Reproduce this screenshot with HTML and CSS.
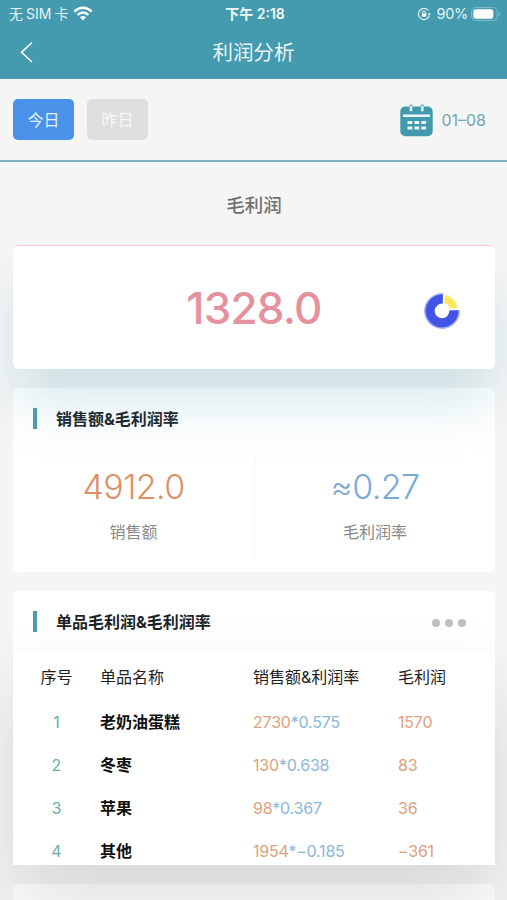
FILE: index.html
```html
<!DOCTYPE html>
<html lang="zh-CN">
<head>
<meta charset="utf-8">
<title>利润分析</title>
<link rel="stylesheet" href="styles.css">
</head>
<body>
<header class="top">
  <div class="status">
    <div class="status-left"><span>无<span class="sim">SIM</span>卡</span>
      <svg class="wifi" width="20" height="15" viewBox="0 0 20 15"><path d="M10 14.6 6.9 11.3Q10 8.7 13.1 11.3Z" fill="#fff"/><path d="M4.6 8.9Q10 4.2 15.4 8.9M1.3 5.5Q10-2 18.7 5.5" fill="none" stroke="#fff" stroke-width="2.5"/></svg>
    </div>
    <div class="status-time">下午 2:18</div>
    <div class="status-right">
      <svg width="14" height="14" viewBox="0 0 14 14"><circle cx="7" cy="7" r="5.6" fill="none" stroke="#e4f3f5" stroke-width="1.2" stroke-dasharray="29 6" transform="rotate(15 7 7)"/><path d="M10.6 6.2h3.2l-1.6 2.3z" fill="#e4f3f5"/><rect x="4.7" y="6.2" width="4.6" height="3.6" rx=".5" fill="#fff"/><path d="M5.6 6.4V5.3a1.4 1.4 0 0 1 2.8 0v1.1" fill="none" stroke="#fff" stroke-width=".9"/></svg>
      <span>90%</span>
      <svg width="30" height="14" viewBox="0 0 30 14"><rect x=".6" y=".6" width="25.6" height="12.8" rx="4" fill="none" stroke="#81bdc9" stroke-width="1"/><rect x="2.3" y="2.3" width="20" height="9.4" rx="2.6" fill="#fff"/><path d="M27.8 4.8q1.6.8 1.6 2.2t-1.6 2.2z" fill="#81bdc9"/></svg>
    </div>
  </div>
  <div class="nav">
    <svg class="back" width="14" height="22" viewBox="0 0 14 22"><path d="M12 1.5 1.5 11.3 12 21" fill="none" stroke="#fff" stroke-width="1.6"/></svg>
    <h1>利润分析</h1>
  </div>
</header>

<section class="filter">
  <button class="day day-active">今日</button>
  <button class="day">昨日</button>
  <div class="date">
    <svg width="33" height="33" viewBox="0 0 33 33"><rect x=".3" y="2.5" width="32.4" height="29.8" rx="5" fill="#429aae"/><path d="M11 .8v5.4M22.3 .8v5.4" stroke="#429aae" stroke-width="2.6"/><path d="M11 2v5.2M22.3 2v5.2" stroke="#e3f2f4" stroke-width="2.6"/><path d="M3 11.7h27" stroke="#e9f5f6" stroke-width="2.6"/><path d="M7.5 18.5h18.6M7.5 24h18.6" stroke="#e9f5f6" stroke-width="3" stroke-dasharray="4.8 2.1"/></svg>
    <span>01–08</span>
  </div>
</section>

<main>
  <h2>毛利润</h2>
  <section class="card profit">
    <strong>1328.0</strong>
    <svg class="donut" width="36" height="36" viewBox="0 0 36 36"><path d="M18 0A18 18 0 1 0 36 17L25.4 17.2A7.4 7.4 0 1 1 18.7 10.6L19.3 .1Z" fill="#a9b2f4"/><path d="M18.9 1.6A16.4 16.4 0 1 0 34.4 17.2L25.4 17.5A7.4 7.4 0 1 1 18.7 10.6Z" fill="#4254e6"/><path d="M21 .8A17 17 0 0 1 34.5 14.7L25.8 15.4A8.4 8.4 0 0 0 20.2 9.9Z" fill="#faf4b0"/><path d="M21 2.6A15 15 0 0 1 32.8 14.8L25.8 15.4A8.4 8.4 0 0 0 20.2 9.9Z" fill="#f7e85c"/></svg>
  </section>

  <section class="card summary">
    <h3>销售额&amp;毛利润率</h3>
    <div class="figures">
      <div class="figure"><b class="orange">4912.0</b><span>销售额</span></div>
      <div class="figure"><b class="blue">≈0.27</b><span>毛利润率</span></div>
    </div>
  </section>

  <section class="card items">
    <div class="items-head"><h3>单品毛利润&amp;毛利润率</h3><div class="dots"><i></i><i></i><i></i></div></div>
    <div class="table">
      <div class="row head"><span>序号</span><span>单品名称</span><span>销售额&amp;利润率</span><span>毛利润</span></div>
      <div class="row"><span class="no">1</span><span class="name">老奶油蛋糕</span><span class="calc">2730<em>*0.575</em></span><span class="sum">1570</span></div>
      <div class="row"><span class="no">2</span><span class="name">冬枣</span><span class="calc">130<em>*0.638</em></span><span class="sum">83</span></div>
      <div class="row"><span class="no">3</span><span class="name">苹果</span><span class="calc">98<em>*0.367</em></span><span class="sum">36</span></div>
      <div class="row"><span class="no">4</span><span class="name">其他</span><span class="calc">1954<em>*−0.185</em></span><span class="sum">−361</span></div>
    </div>
  </section>
  <section class="card next"></section>
</main>
</body>
</html>
```

FILE: styles.css
```css
* { box-sizing: border-box; }
body {
  margin: 0;
  height: 900px;
  overflow: hidden;
  background: #f5f5f5;
  color: #222;
  font-family: Inter, "Noto Sans CJK SC", sans-serif;
  font-size: 16px;
}
h1, h2, h3 { margin: 0; }
.top { height: 79px; background: #449aae; border-bottom: 1px solid #4f95b0; color: #fff; }
.status {
  display: grid;
  grid-template-columns: 1fr auto 1fr;
  align-items: center;
  height: 27px;
  padding: 0 6px 0 9px;
  font-size: 14px;
  color: #e4f3f5;
}
.status-left, .status-right { display: flex; align-items: center; }
.status-left { gap: 5px; }
.status-left > span, .status-time { margin-top: -2px; }
.status-left .sim { margin: 0 3px; }
.wifi { margin-top: -1px; }
.status-time { font-weight: 600; color: #f2fafa; }
.status-right { justify-content: flex-end; gap: 6px; }
.status-right span { margin-right: -3px; font-size: 14.5px; letter-spacing: -.3px; }
.nav { display: grid; grid-template-columns: 60px 1fr 60px; align-items: center; height: 50px; }
.back { margin-left: 20px; }
.nav h1 { padding-top: 1px; text-align: center; font-size: 20.5px; font-weight: 400; line-height: 30px; color: #eaf6f8; }
.filter {
  display: flex;
  align-items: center;
  gap: 13px;
  height: 83px;
  padding: 0 21px 0 13px;
  border-bottom: 2px solid #7fb2c0;
}
.day {
  width: 61px;
  height: 41px;
  padding: 0 0 2px;
  border: 0;
  border-radius: 5px;
  background: #dedede;
  color: #f7f7f7;
  font: 16px Inter, "Noto Sans CJK SC", sans-serif;
}
.day-active { background: #4a91e9; color: #e4f1ff; }
.date { display: flex; align-items: center; gap: 8px; margin-left: auto; color: #71a7ad; }
.date svg { margin-top: 1px; }
main { padding: 0 12px 0 13px; }
h2 { height: 83px; text-align: center; font-size: 18.5px; font-weight: 500; line-height: 87px; color: #707070; }
.card { border-radius: 6px; background: #fff; }
.profit {
  position: relative;
  z-index: 1;
  display: grid;
  grid-template-columns: 1fr auto 1fr;
  align-items: center;
  height: 124px;
  margin-bottom: 19px;
  border-top: 1px solid #ffc8d0;
  box-shadow: 0 38px 56px -4px rgba(68, 154, 174, .22);
}
.profit strong { grid-column: 2; font-size: 44px; font-weight: 500; letter-spacing: -.8px; color: #e6929e; }
.donut { justify-self: end; margin: 7px 35px 0 0; }
.summary { height: 184px; margin-bottom: 19px; }
h3 { display: flex; align-items: center; height: 60px; padding-left: 20px; font-size: 16px; font-weight: 700; color: #1c2428; }
h3::before { content: ""; width: 4px; height: 21px; margin-right: 19px; background: #4d9cab; }
.figures { display: grid; grid-template-columns: 1fr 1fr; margin-top: 7px; }
.figure { height: 104px; text-align: center; }
.figure + .figure { border-left: 1px solid #f2f2f2; }
.figure b { display: block; height: 64px; font-size: 34px; font-weight: 300; line-height: 64px; letter-spacing: -.6px; }
.figure span { display: block; color: #888; line-height: 27px; }
.orange { color: #dd9066; }
.blue { color: #7aaad8; }
.items { height: 274px; margin-bottom: 19px; border-radius: 6px 6px 0 0; }
.items-head { display: flex; align-items: center; justify-content: space-between; height: 60px; }
.dots { display: flex; gap: 5px; margin: 3px 29px 0 0; }
.dots i { width: 8px; height: 8px; border-radius: 50%; background: #c0c0c0; }
.table { position: relative; z-index: 1; height: 214px; padding-top: 4px; background: #fff; box-shadow: 0 40px 80px rgba(40, 40, 55, .15); }
.row { display: grid; grid-template-columns: 87px 153px 145px 1fr; height: 43px; line-height: 43px; }
.row > :first-child { text-align: center; }
.head { height: 46px; line-height: 44px; }
.no { color: #6aada9; }
.name { font-weight: 700; color: #111; }
.calc, .sum { color: #dda17c; letter-spacing: -.2px; }
.calc em { color: #8bb7d8; font-style: normal; }
.next { height: 16px; border-radius: 6px 6px 0 0; }
```
